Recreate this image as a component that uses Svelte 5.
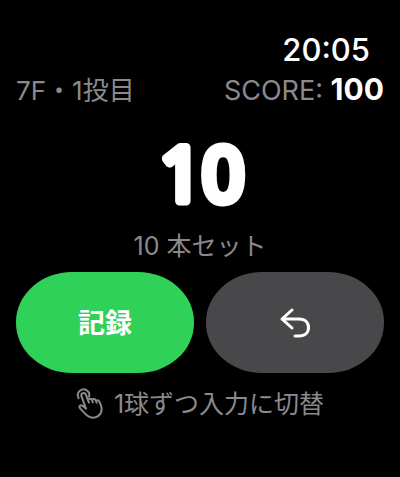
<script lang="ts">
  let frame = $state(7);
  let ball = $state(1);
  let score = $state(100);
  let pins = $state(10);
</script>

<main class="screen">
  <time class="clock">20:05</time>

  <header class="status">
    <span class="muted">{frame}F・{ball}投目</span>
    <span class="score"><span class="muted">SCORE:</span> <strong>{score}</strong></span>
  </header>

  <!-- the stroke rounds off the corners of the digits -->
  <svg class="pins" viewBox="0 0 160 105" role="img" aria-label="{pins}">
    <text x="82" y="78" text-anchor="middle">{pins}</text>
  </svg>
  <p class="caption">{pins} 本セット</p>

  <div class="actions">
    <button class="action record">記録</button>
    <button class="action undo" aria-label="undo">
      <svg class="icon" width="32" height="32" viewBox="0 0 32 32">
        <path d="M13 3 L3 12 L13 21 M3 12 H20 C26 12 29.5 15.5 29.5 20.5 C29.5 25.5 26 29 20 29 H16" />
      </svg>
    </button>
  </div>

  <button class="toggle">
    <svg class="icon" width="28" height="32" viewBox="0 0 28 32">
      <path d="M2.6 10.2 C-0.6 3.6 6.4 -0.6 10.8 2.4 C13.3 4 13.7 6.4 13 8.6" />
      <path
        d="M10 20.6 L5.4 8.2 C4.6 4.9 8.7 3.7 9.9 6.7 L12.9 14.6 L12.3 12.9 C11.8 10.5 15 9.8 16 12.2 L16.8 14.4 L16.3 13 C16 10.8 18.8 10.2 19.8 12.4 L20.6 14.7 L20.3 13.8 C20.2 12 22.4 11.9 23.2 13.4 C24.6 16.2 26 18.8 25.6 22.2 C25 27.6 20.2 30.2 15.6 29.6 C10.6 29 8.2 24.4 4.3 20.6 C2.2 18.3 4.6 16.4 6.8 18 L10 20.6"
      />
    </svg>
    <span>1球ずつ入力に切替</span>
  </button>
</main>

<style>
  :global(body) {
    margin: 0;
    background: #000;
  }

  .screen {
    box-sizing: border-box;
    min-height: 100vh;
    padding: 32px 16px 24px;
    display: flex;
    flex-direction: column;
    background: #000;
    color: #fff;
    font-family: Inter, 'Noto Sans CJK JP', sans-serif;
    font-size: 25px;
    line-height: 36px;
  }

  .clock {
    align-self: flex-end;
    margin-right: 14px;
    font-size: 31px;
    font-weight: 500;
  }

  .status {
    display: flex;
    justify-content: space-between;
    align-items: baseline;
    margin-top: 3px;
    font-size: 26px;
    white-space: nowrap;
  }

  .muted,
  .caption,
  .toggle {
    color: #8a8a8e;
  }

  .score {
    font-size: 27px;
  }

  .score strong {
    font-size: 30px;
    font-weight: 700;
  }

  .pins {
    align-self: center;
    width: 160px;
    height: 105px;
    margin-top: 14px;
    fill: #fff;
    stroke: #fff;
    stroke-width: 9;
    stroke-linejoin: round;
    font-family: 'Noto Sans', sans-serif;
    font-size: 74px;
    font-weight: 400;
  }

  .caption {
    margin: 0 0 8px;
    text-align: center;
  }

  .actions {
    display: grid;
    grid-template-columns: 1fr 1fr;
    gap: 12px;
  }

  button {
    border: none;
    padding: 0;
    color: inherit;
    font: inherit;
    cursor: pointer;
  }

  .action {
    display: flex;
    align-items: center;
    justify-content: center;
    height: 101px;
    border-radius: 56px / 50px;
  }

  .record {
    padding-top: 3px;
    background: #30d158;
    font-size: 27px;
    font-weight: 700;
  }

  .undo {
    background: #48484a;
  }

  .toggle {
    display: flex;
    align-items: center;
    justify-content: center;
    gap: 10px;
    margin-top: 13px;
    background: none;
    white-space: nowrap;
  }

  .icon {
    fill: none;
    stroke: currentColor;
    stroke-width: 2;
    stroke-linecap: round;
    stroke-linejoin: round;
  }

  .undo .icon {
    stroke-width: 3;
  }
</style>
